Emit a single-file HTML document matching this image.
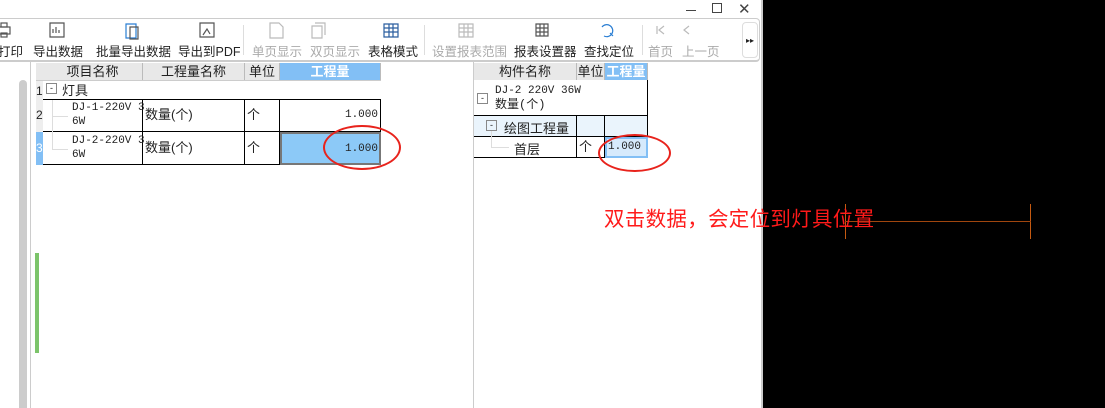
<!DOCTYPE html>
<html><head><meta charset="utf-8"><style>
*{margin:0;padding:0;box-sizing:border-box}
body{width:1105px;height:408px;overflow:hidden;background:#000;position:relative;font-family:"Liberation Sans","Noto Sans CJK SC",sans-serif;font-size:12px;color:#222}
.a{position:absolute}
.tb{font-size:12.5px;white-space:nowrap}
.dis{color:#aaa}
.cell{position:absolute;border-right:1px solid #000;border-bottom:1px solid #000;font-size:13px;line-height:16px}
.mono{font-family:"Liberation Mono","Noto Sans CJK SC",monospace;font-size:11px}
.hd{position:absolute;background:#e8e8e8;border-right:1px solid #bbb;text-align:center;font-size:13px;line-height:17px}
</style></head><body>
<div class="a" style="left:0;top:0;width:762px;height:408px;background:#fff"></div>
<div class="a" style="left:761px;top:0;width:2px;height:408px;background:#ccc"></div>
<div class="a" style="left:686px;top:10px;width:10px;height:1px;background:#444"></div>
<div class="a" style="left:712px;top:3px;width:10px;height:10px;border:1px solid #444"></div>
<div class="a" style="left:738px;top:0px;font-size:15px;color:#444">✕</div>
<div class="a" style="left:0;top:18px;width:760px;height:44px;border-top:1px solid #ccc;border-right:1px solid #ccc;border-bottom:2px solid #ccc;border-radius:0 4px 4px 0"></div>
<svg class="a" style="left:0;top:21px" width="760" height="22">
 <g fill="none" stroke="#555" stroke-width="1.2">
 <rect x="-2" y="6" width="12" height="7"/><rect x="1" y="2" width="6" height="4"/><rect x="1" y="12" width="6" height="4"/>
 <path d="M50 2h14v14h-14zM53 12v-4M56 12v-6M59 12v-3"/>
 <path d="M126 3h10v14h-10z" stroke="#2a7ed3"/><path d="M130 6h8v12h-8z"/>
 <path d="M200 2h14v14h-14zM203 14l4-6 3 5"/>
 <path d="M270 2h9l4 4v11h-13z" stroke="#bbb"/>
 <path d="M312 5h10v12h-10zM315 2h10v12" stroke="#bbb"/>
 <path d="M384 3h14v13h-14zM384 7h14M384 11h14M389 3v13M393 3v13" stroke="#2a5d9f"/>
 <path d="M459 3h14v13h-14zM459 7h14M459 11h14M464 3v13M468 3v13" stroke="#bbb"/>
 <path d="M536 3h12v12h-12zM536 7h12M536 11h12M540 3v12M544 3v12"/>
 <path d="M602 6a6 6 0 1 1 2 9M610 12l3 3" stroke="#2a7ed3"/>
 <path d="M657 5v8M664 5l-5 4 5 4" stroke="#bbb"/>
 <path d="M689 5l-5 4 5 4" stroke="#bbb"/>
 </g></svg>
<div class="a" style="left:642px;top:25px;width:1px;height:30px;background:#ddd"></div>
<div class="a" style="left:243px;top:25px;width:1px;height:30px;background:#ddd"></div>
<div class="a" style="left:424px;top:25px;width:1px;height:30px;background:#ddd"></div>
<div class="a" style="left:742px;top:22px;width:16px;height:36px;border:1px solid #ddd;border-radius:4px;font-size:8px;text-align:center;line-height:36px">▸▸</div>
<div class="a tb" style="left:-2px;top:41px">打印</div>
<div class="a tb" style="left:33px;top:41px">导出数据</div>
<div class="a tb" style="left:96px;top:41px">批量导出数据</div>
<div class="a tb" style="left:178px;top:41px">导出到PDF</div>
<div class="a tb dis" style="left:252px;top:41px">单页显示</div>
<div class="a tb dis" style="left:310px;top:41px">双页显示</div>
<div class="a tb" style="left:368px;top:41px">表格模式</div>
<div class="a tb dis" style="left:432px;top:41px">设置报表范围</div>
<div class="a tb" style="left:514px;top:41px">报表设置器</div>
<div class="a tb" style="left:584px;top:41px">查找定位</div>
<div class="a tb dis" style="left:648px;top:41px">首页</div>
<div class="a tb dis" style="left:682px;top:41px">上一页</div>
<div class="a" style="left:19px;top:80px;width:8px;height:328px;background:#ccc;border-radius:4px 4px 0 0"></div>
<div class="a" style="left:30px;top:62px;width:1px;height:346px;background:#ccc"></div>
<div class="a" style="left:35px;top:253px;width:4px;height:100px;background:#7cc46a"></div>
<div class="a" style="left:473px;top:62px;width:1px;height:346px;background:#ccc"></div>
<div class="a" style="left:36px;top:63px;width:345px;height:18px;background:#e8e8e8;border-bottom:1px solid #ccc"></div>
<div class="hd" style="left:43px;top:63px;width:100px;height:17px">项目名称</div>
<div class="hd" style="left:143px;top:63px;width:102px;height:17px">工程量名称</div>
<div class="hd" style="left:245px;top:63px;width:35px;height:17px">单位</div>
<div class="hd" style="left:280px;top:63px;width:101px;height:17px;background:#82bff5;color:#fff;font-weight:bold">工程量</div>
<div class="a" style="left:36px;top:81px;width:7px;height:84px;background:#eee"></div>
<div class="a" style="left:36px;top:132px;width:7px;height:33px;background:#82bff5"></div>
<div class="a" style="left:36px;top:84px;font-size:12px">1</div>
<div class="a" style="left:36px;top:108px;font-size:12px">2</div>
<div class="a" style="left:36px;top:141px;font-size:12px;color:#fff">3</div>
<div class="a" style="left:46px;top:83px;width:11px;height:11px;border:1px solid #888;font-size:9px;line-height:8px;text-align:center">-</div>
<div class="a" style="left:62px;top:80px;font-size:13px">灯具</div>
<div class="a" style="left:43px;top:99px;width:338px;height:1px;background:#000"></div>
<div class="cell" style="left:43px;top:99px;width:100px;height:33px"></div>
<div class="a mono" style="left:72px;top:101px;line-height:14px">DJ-1-220V 3<br>6W</div>
<div class="cell" style="left:143px;top:99px;width:102px;height:33px;padding:8px 2px">数量(个)</div>
<div class="cell" style="left:245px;top:99px;width:35px;height:33px;padding:8px 2px">个</div>
<div class="cell mono" style="left:280px;top:99px;width:101px;height:33px;padding:8px 2px;text-align:right;font-size:11px">1.000</div>
<div class="cell" style="left:43px;top:132px;width:100px;height:33px"></div>
<div class="a mono" style="left:72px;top:134px;line-height:14px">DJ-2-220V 3<br>6W</div>
<div class="cell" style="left:143px;top:132px;width:102px;height:33px;padding:8px 2px">数量(个)</div>
<div class="cell" style="left:245px;top:132px;width:35px;height:33px;padding:8px 2px">个</div>
<div class="cell mono" style="left:280px;top:132px;width:101px;height:33px;padding:7px 1px;text-align:right;background:#8cc9f7;border:2px solid #777;font-size:11px">1.000</div>
<div class="a" style="left:52px;top:100px;width:1px;height:50px;background:#ddd"></div>
<div class="a" style="left:52px;top:116px;width:16px;height:1px;background:#ddd"></div>
<div class="a" style="left:52px;top:149px;width:16px;height:1px;background:#ddd"></div>
<div class="a" style="left:323px;top:125px;width:78px;height:45px;border:2px solid #e8231c;border-radius:50%"></div>
<div class="a" style="left:474px;top:63px;width:174px;height:17px;background:#e8e8e8;border-bottom:1px solid #ccc"></div>
<div class="hd" style="left:474px;top:63px;width:103px;height:17px">构件名称</div>
<div class="hd" style="left:577px;top:63px;width:28px;height:17px">单位</div>
<div class="hd" style="left:605px;top:63px;width:43px;height:17px;background:#82bff5;color:#fff;font-weight:bold">工程量</div>
<div class="cell" style="left:474px;top:80px;width:174px;height:36px"></div>
<div class="a" style="left:477px;top:93px;width:11px;height:11px;border:1px solid #888;font-size:9px;line-height:8px;text-align:center">-</div>
<div class="a mono" style="left:495px;top:84px;line-height:14px">DJ-2 220V 36W<br><span style="font-size:12px">数量(个)</span></div>
<div class="cell" style="left:474px;top:116px;width:103px;height:21px;background:#eaf4fc"></div>
<div class="cell" style="left:577px;top:116px;width:28px;height:21px;background:#eaf4fc"></div>
<div class="cell" style="left:605px;top:116px;width:43px;height:21px;background:#eaf4fc"></div>
<div class="a" style="left:486px;top:120px;width:11px;height:11px;border:1px solid #888;font-size:9px;line-height:8px;text-align:center">-</div>
<div class="a" style="left:504px;top:118px;font-size:13px">绘图工程量</div>
<div class="cell" style="left:474px;top:137px;width:103px;height:21px"></div>
<div class="a" style="left:514px;top:139px;font-size:13px">首层</div>
<div class="cell" style="left:577px;top:137px;width:28px;height:21px;padding:2px">个</div>
<div class="a mono" style="left:605px;top:137px;width:43px;height:21px;background:#d6eafc;border:2px solid #82bff5;padding:2px 1px">1.000</div>
<div class="a" style="left:491px;top:131px;width:1px;height:16px;background:#ddd"></div>
<div class="a" style="left:491px;top:147px;width:18px;height:1px;background:#ddd"></div>
<div class="a" style="left:598px;top:134px;width:73px;height:38px;border:2px solid #e8231c;border-radius:50%"></div>
<div class="a" style="left:845px;top:204px;width:1px;height:35px;background:#c55a11"></div>
<div class="a" style="left:1030px;top:204px;width:1px;height:35px;background:#c55a11"></div>
<div class="a" style="left:845px;top:221px;width:186px;height:1px;background:#a0460e"></div>
<div class="a" style="left:604px;top:202px;font-size:20.5px;color:#ff1a1a;white-space:nowrap;letter-spacing:0.3px">双击数据，会定位到灯具位置</div>
</body></html>
